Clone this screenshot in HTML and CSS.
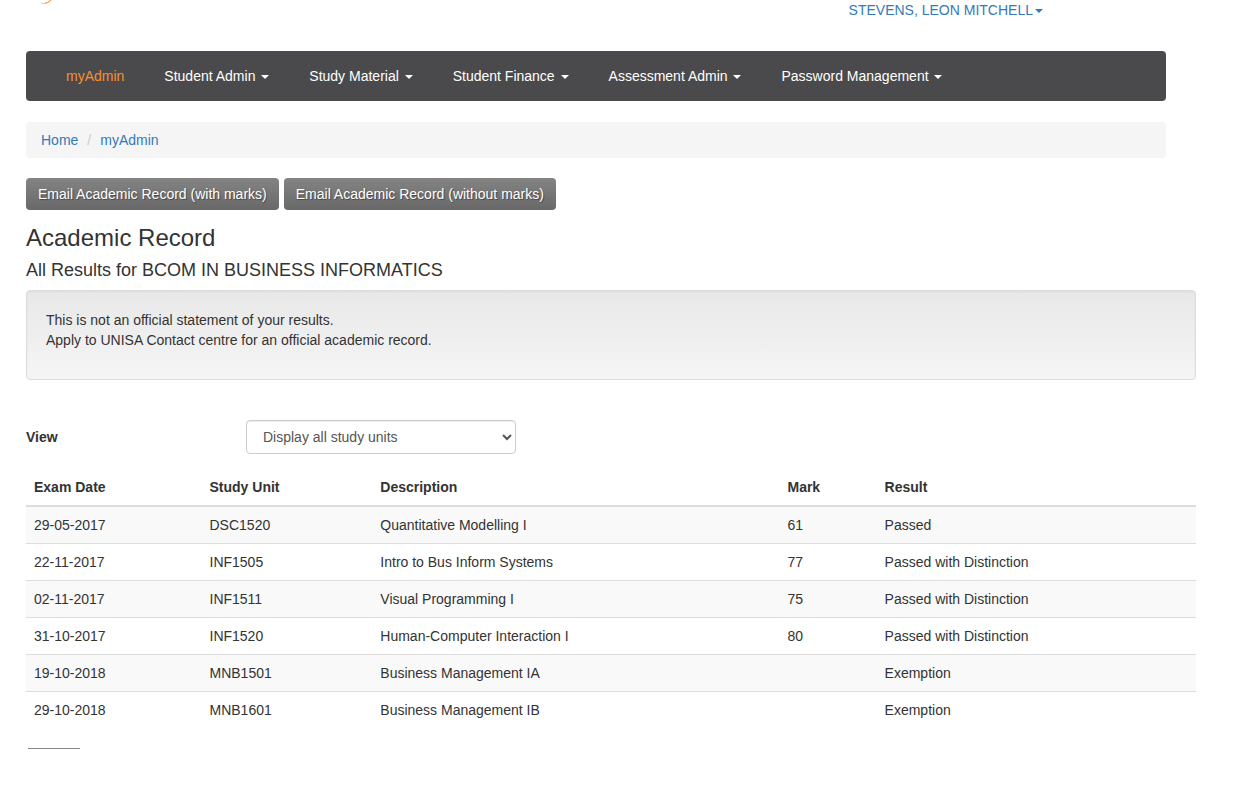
FILE: index.html
```html
<!DOCTYPE html>
<html lang="en">
<head>
<meta charset="utf-8">
<meta name="viewport" content="width=device-width, initial-scale=1">
<title>Academic Record</title>
<link rel="stylesheet" href="styles.css">
</head>
<body>
<div class="page">
  <header class="site-header">
    <svg class="logo" width="12" height="5" viewBox="0 0 12 5" aria-hidden="true">
      <path d="M0.5 2.5 Q1 3.8 3 3.6 Q7 3.2 10.5 0" fill="none" stroke="#f7b77d" stroke-width="1"/>
      <path d="M4 3.4 Q7 2.8 10 0" fill="none" stroke="#f39a3c" stroke-width="1"/>
    </svg>
    <a class="account" href="#">STEVENS, LEON MITCHELL<span class="caret"></span></a>
  </header>
  <nav class="navbar">
    <a class="nav-link active" href="#">myAdmin</a>
    <a class="nav-link" href="#">Student Admin <span class="caret"></span></a>
    <a class="nav-link" href="#">Study Material <span class="caret"></span></a>
    <a class="nav-link" href="#">Student Finance <span class="caret"></span></a>
    <a class="nav-link" href="#">Assessment Admin <span class="caret"></span></a>
    <a class="nav-link" href="#">Password Management <span class="caret"></span></a>
  </nav>
  <ol class="breadcrumb">
    <li><a href="#">Home</a></li>
    <li><a href="#">myAdmin</a></li>
  </ol>
  <main>
    <div class="actions">
      <button class="btn" type="button">Email Academic Record (with marks)</button>
      <button class="btn" type="button">Email Academic Record (without marks)</button>
    </div>
    <h1 class="title">Academic Record</h1>
    <h2 class="subtitle">All Results for BCOM IN BUSINESS INFORMATICS</h2>
    <div class="notice">
      <p>This is not an official statement of your results.<br>Apply to UNISA Contact centre for an official academic record.</p>
    </div>
    <div class="filter">
      <label for="view">View</label>
      <select id="view" class="select">
        <option>Display all study units</option>
      </select>
    </div>
    <table class="results">
      <colgroup><col class="col-date"><col class="col-unit"><col class="col-description"><col class="col-mark"><col></colgroup>
      <thead>
        <tr><th>Exam Date</th><th>Study Unit</th><th>Description</th><th>Mark</th><th>Result</th></tr>
      </thead>
      <tbody>
        <tr><td>29-05-2017</td><td>DSC1520</td><td>Quantitative Modelling I</td><td>61</td><td>Passed</td></tr>
        <tr><td>22-11-2017</td><td>INF1505</td><td>Intro to Bus Inform Systems</td><td>77</td><td>Passed with Distinction</td></tr>
        <tr><td>02-11-2017</td><td>INF1511</td><td>Visual Programming I</td><td>75</td><td>Passed with Distinction</td></tr>
        <tr><td>31-10-2017</td><td>INF1520</td><td>Human-Computer Interaction I</td><td>80</td><td>Passed with Distinction</td></tr>
        <tr><td>19-10-2018</td><td>MNB1501</td><td>Business Management IA</td><td></td><td>Exemption</td></tr>
        <tr><td>29-10-2018</td><td>MNB1601</td><td>Business Management IB</td><td></td><td>Exemption</td></tr>
      </tbody>
    </table>
    <div class="end-rule"></div>
  </main>
</div>
</body>
</html>
```

FILE: styles.css
```css
* {
  box-sizing: border-box;
}

body {
  margin: 0;
  background: #fff;
  color: #333;
  font: 14px/20px "Liberation Sans", Arial, sans-serif;
}

a {
  color: #337ab7;
  text-decoration: none;
}

.page {
  padding: 0 50px 0 26px;
}

.site-header {
  display: flex;
  justify-content: space-between;
  align-items: flex-start;
  padding: 0 153px 0 15px;
  margin-bottom: 31px;
}

.caret {
  display: inline-block;
  margin-left: 2px;
  vertical-align: middle;
  border-top: 4px solid;
  border-right: 4px solid transparent;
  border-left: 4px solid transparent;
}

.navbar {
  display: flex;
  flex-wrap: wrap;
  margin: 0 30px 21px 0;
  padding: 0 20px;
  border-radius: 4px;
  background: #4a4a4c;
}

.nav-link {
  padding: 15px 20px;
  color: #fff;
}

.nav-link.active {
  color: #f7902d;
}

.breadcrumb {
  display: flex;
  margin: 0 30px 20px 0;
  padding: 8px 15px;
  border-radius: 4px;
  background: #f5f5f5;
  list-style: none;
}

.breadcrumb li + li::before {
  content: "/";
  padding: 0 9px;
  color: #ccc;
}

.actions {
  display: flex;
  flex-wrap: wrap;
  gap: 5px;
}

.btn {
  padding: 6px 12px;
  border: 0;
  border-radius: 4px;
  background: linear-gradient(#848484, #686868);
  color: #fff;
  font: inherit;
  text-shadow: 1px 1px 1px rgba(0, 0, 0, 0.4);
}

.title {
  margin: 15px 0 9px;
  font-size: 24px;
  font-weight: 400;
  line-height: 26px;
}

.subtitle {
  margin: 0 0 10px;
  font-size: 18px;
  font-weight: 400;
  line-height: 20px;
}

.notice {
  margin-bottom: 40px;
  padding: 19px;
  border: 1px solid #dcdcdc;
  border-radius: 4px;
  background: linear-gradient(#e8e8e8, #f5f5f5);
  box-shadow: inset 0 1px 3px rgba(0, 0, 0, 0.05);
}

.notice p {
  margin: 0 0 10px;
}

.filter {
  display: grid;
  grid-template-columns: 220px 270px;
  align-items: center;
  margin-bottom: 15px;
  font-weight: 700;
}

.select {
  height: 34px;
  padding: 6px 1px 6px 12px;
  border: 1px solid #ccc;
  border-radius: 4px;
  background-color: #fff;
  box-shadow: inset 0 1px 1px rgba(0, 0, 0, 0.075);
  color: #555;
  font: inherit;
  font-weight: 400;
}

.results {
  width: 100%;
  border-collapse: collapse;
  table-layout: fixed;
}

.col-date {
  width: 15%;
}

.col-unit {
  width: 14.6%;
}

.col-description {
  width: 34.8%;
}

.col-mark {
  width: 8.3%;
}

.results th,
.results td {
  padding: 8px;
  text-align: left;
}

.results th {
  border-bottom: 2px solid #ddd;
}

.results td {
  border-top: 1px solid #ddd;
}

.results tbody tr:nth-child(odd) {
  background: #f9f9f9;
}

.end-rule {
  width: 52px;
  margin: 20px 0 0 2px;
  border-top: 1px solid #888;
}
```
